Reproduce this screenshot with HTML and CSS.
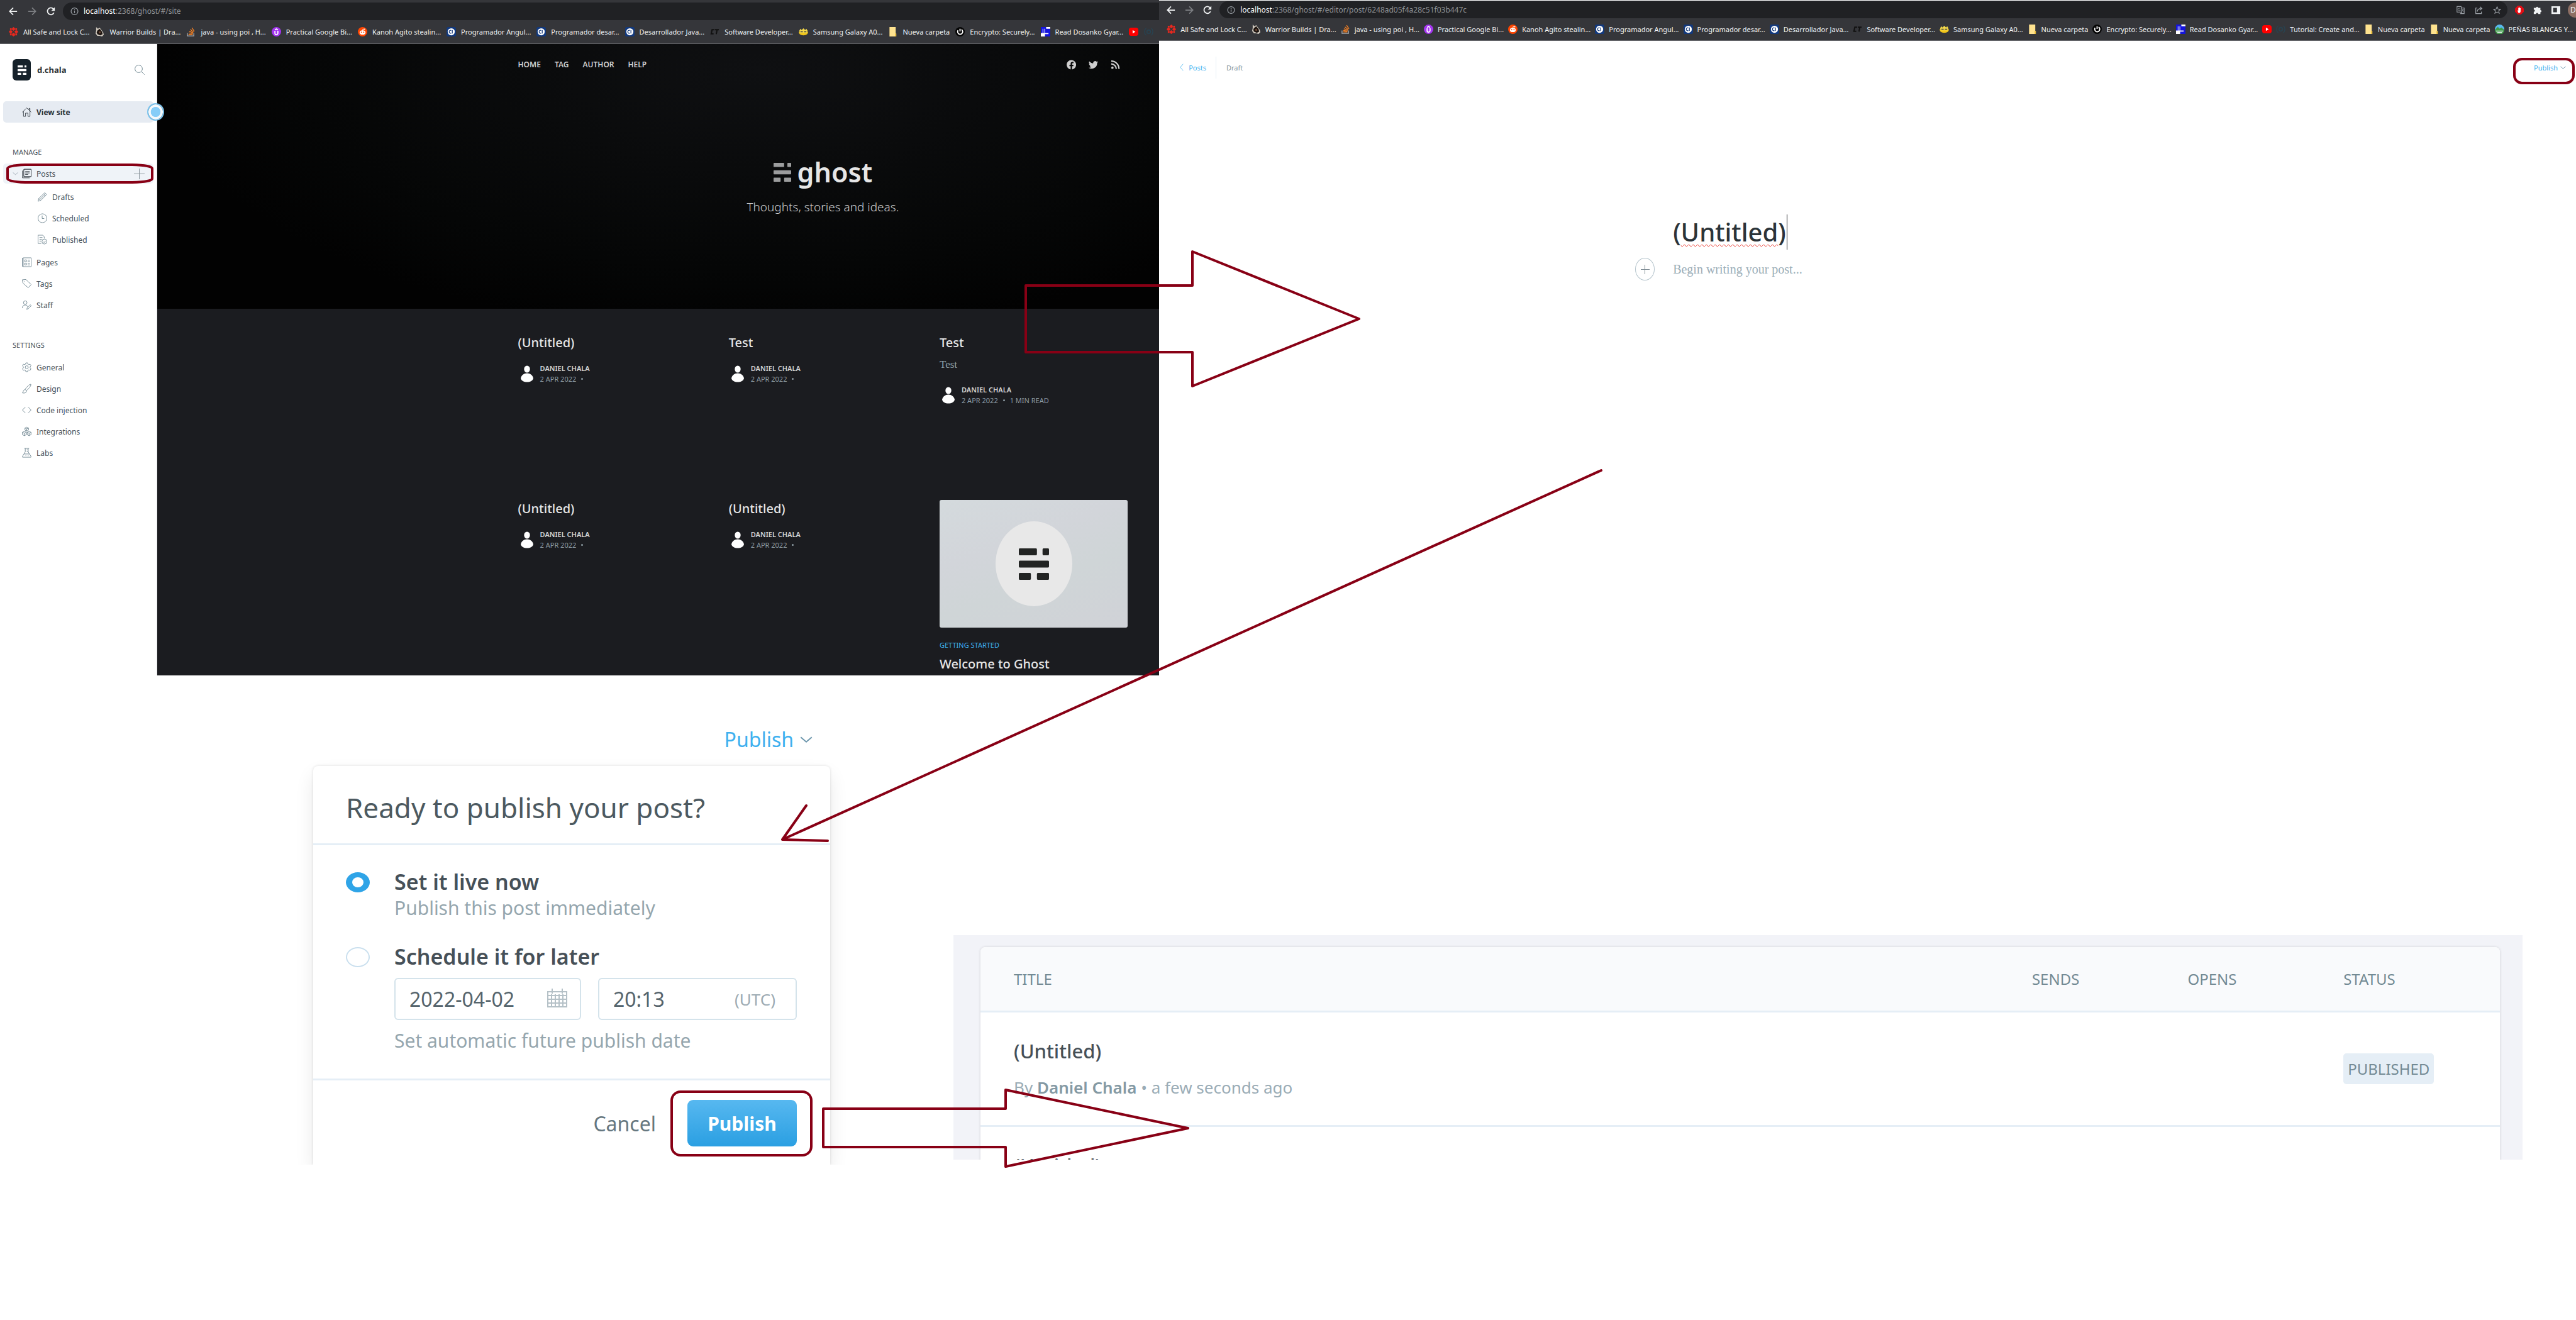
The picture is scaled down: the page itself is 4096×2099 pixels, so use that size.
FILE: index.html
```html
<!DOCTYPE html>
<html lang="en">
<head>
<meta charset="utf-8">
<title>Ghost publishing flow</title>
<link rel="stylesheet" href="styles.css">
</head>
<body>
<svg class="defs" aria-hidden="true">
  <symbol id="back" viewBox="0 0 16 16"><path d="M15 8H2M8 1.5 1.5 8 8 14.500" fill="none" stroke="currentColor" stroke-width="2"/></symbol>
  <symbol id="forward" viewBox="0 0 16 16"><path d="M1 8h13M8 1.500 14.500 8 8 14.500" fill="none" stroke="currentColor" stroke-width="2"/></symbol>
  <symbol id="reload" viewBox="0 0 16 16"><path d="M13.500 10.500A6.200 6.200 0 1 1 12.800 4" fill="none" stroke="currentColor" stroke-width="2"/><path d="M15 .5v6.500H8.500z" fill="currentColor"/></symbol>
  <symbol id="info" viewBox="0 0 16 16"><circle cx="8" cy="8" r="6.700" fill="none" stroke="currentColor" stroke-width="1.500"/><path d="M8 7v4.500M8 4.200v1.700" stroke="currentColor" stroke-width="1.600"/></symbol>
  <symbol id="fandom" viewBox="0 0 16 16"><g fill="#e8281e"><path d="M8 0l2.500 2v2.500L8 6.500 5.500 4.500V2zM8 16l2.500-2v-2.500L8 9.500l-2.500 2V14zM0 8l2-2.500h2.500L6.500 8l-2 2.500H2zM16 8l-2-2.500h-2.500L9.500 8l2 2.500H14z"/><path d="M2 2h3v3H2zM11 2h3v3h-3zM2 11h3v3H2zM11 11h3v3h-3z"/></g></symbol>
  <symbol id="warrior" viewBox="0 0 16 16"><path d="M2 0l3 3 3-2 3 4 3 4 1 4-3 3-4-1-4 0-3-4 1-5z" fill="#cfc8bd"/><path d="M4 6l4-3 4 5 1 4-4 2-5-2-1-3z" fill="#1b130f"/><path d="M6 8l3-1 1 3-3 1z" fill="#6d4a37"/></symbol>
  <symbol id="stack" viewBox="0 0 16 16"><path d="M2 10v5h11v-5" fill="none" stroke="#a9adb1" stroke-width="1.400"/><path d="M4 12.500h7M4.300 10l7 1M5.200 7l6.500 2.800M7 4l5.500 4.500M9.800 1.300l4 6" stroke="#f48024" stroke-width="1.400"/></symbol>
  <symbol id="udemy" viewBox="0 0 16 16"><circle cx="8" cy="8" r="8" fill="#a435f0"/><path d="M5.500 6.500v4a2.500 2.500 0 0 0 5 0v-4M5.500 5 8 3.300 10.500 5" fill="none" stroke="#fff" stroke-width="1.800"/></symbol>
  <symbol id="reddit" viewBox="0 0 16 16"><circle cx="8" cy="8" r="8" fill="#ff4500"/><ellipse cx="8" cy="9.300" rx="5" ry="3.600" fill="#fff"/><circle cx="11.300" cy="3.800" r="1.100" fill="#fff"/><path d="M8 6l.7-2.700 2.300.5" fill="none" stroke="#fff"/><circle cx="6" cy="8.800" r="1" fill="#ff4500"/><circle cx="10" cy="8.800" r="1" fill="#ff4500"/></symbol>
  <symbol id="ct" viewBox="0 0 16 16"><rect width="16" height="16" rx="3" fill="#12397d"/><circle cx="8" cy="8" r="6" fill="#fff"/><path d="M8 5.700a2.500 2.500 0 1 0 0 4.600M9.800 5v6" fill="none" stroke="#12397d" stroke-width="1.300"/></symbol>
  <symbol id="ctdark" viewBox="0 0 16 16"><path d="M7.500 4.500H3.500L2 11.500h4M8.500 4.500H15M12 4.500 10.500 12" fill="none" stroke="#111" stroke-width="2.200"/></symbol>
  <symbol id="samsung" viewBox="0 0 16 16"><path d="M0 8h16c-.5 4-3 6-8 6S.5 12 0 8z" fill="#f0c419"/><path d="M1 6l2-3 2 2 3-3 3 3 2-2 2 3-1 4H2z" fill="#f4d94a"/><path d="M3 8h4M9 8h4" stroke="#444" stroke-width="1.500"/></symbol>
  <symbol id="folder" viewBox="0 0 16 16"><path d="M2.500 0H13v11h1v5H2.500z" fill="#ffe38f"/><path d="M12 11h2v5h-2z" fill="#e8b931"/></symbol>
  <symbol id="encrypto" viewBox="0 0 16 16"><circle cx="8" cy="8" r="8" fill="#050505"/><path d="M10.500 4.300A4.300 4.300 0 1 1 4.600 5.700M8 3v4.500" fill="none" stroke="#fff" stroke-width="1.900"/></symbol>
  <symbol id="manga" viewBox="0 0 16 16"><rect width="16" height="16" fill="#fff"/><path d="M0 0h9v10H7V3H6v7H4V3H3v7H0zM8 3h8v13H7v-4h6v-2H9z" fill="#1414dc"/></symbol>
  <symbol id="youtube" viewBox="0 0 16 16"><rect y="1" width="16" height="14" rx="4" fill="#f00"/><path d="M6.300 5v6l4.700-3z" fill="#fff"/></symbol>
  <symbol id="tutorial" viewBox="0 0 16 16"><path d="M4 2C0 4 0 12 4 14M12 2c4 2 4 10 0 12" fill="none" stroke="#29424f" stroke-width="1.600"/><circle cx="8" cy="8" r="3" fill="none" stroke="#29424f" stroke-width="2"/></symbol>
  <symbol id="penas" viewBox="0 0 16 16"><circle cx="8" cy="8" r="8" fill="#58b8ea"/><path d="M0 9l5-5 3 3 3-2 5 4a8 8 0 0 1-16 0z" fill="#3f9b46"/><path d="M2 11h12M4 13.500h8" stroke="#e6eef2" stroke-width="1.300"/></symbol>
  <symbol id="translate" viewBox="0 0 16 16"><path d="M1 1h8l1.500 11H1zM9.500 4H15v11H8l2-3" fill="none" stroke="currentColor" stroke-width="1.400"/><path d="M7.500 5.500A2.500 2.500 0 1 0 7.700 8H5.500M11 7h3M12.500 7c0 2-1 3-2 4M11.500 8.500 14 11.500" fill="none" stroke="currentColor"/></symbol>
  <symbol id="share" viewBox="0 0 16 16"><path d="M5 4H2v11h11v-4M5 11c0-4 3-6 8-6M10 1.500 14 5l-4 3.500" fill="none" stroke="currentColor" stroke-width="1.500"/></symbol>
  <symbol id="star" viewBox="0 0 16 16"><path d="M8 1.500l2 4.500 4.800.4-3.700 3.200 1.200 4.800L8 11.800l-4.300 2.600 1.200-4.800L1.200 6.400 6 6z" fill="none" stroke="currentColor" stroke-width="1.300"/></symbol>
  <symbol id="adblock" viewBox="0 0 16 16"><path d="M5 0h6l5 5v6l-5 5H5l-5-5V5z" fill="#e30d13"/><path d="M4.500 8l1.500 1V4h1v3.500V3h1v4.500V3.500h1V8V4.500h1.200V10c0 2-1 3.300-2.700 3.300S5.500 12 4.500 8z" fill="#fff"/></symbol>
  <symbol id="puzzle" viewBox="0 0 16 16"><path d="M1 4h4a2 2 0 1 1 4 0h4v4a2 2 0 1 1 0 4v3H9a2 2 0 1 0-4 0H1v-4a2 2 0 1 0 0-4z" fill="currentColor"/></symbol>
  <symbol id="panel" viewBox="0 0 16 16"><path d="M0 1h16v14H0zM3 4v8h7V4z" fill="currentColor" fill-rule="evenodd"/></symbol>
  <symbol id="chevron" viewBox="0 0 16 16"><path d="M1 5l7 6 7-6" fill="none" stroke="currentColor" stroke-width="1.500"/></symbol>
  <symbol id="chevleft" viewBox="0 0 8 16"><path d="M7 1 1 8l6 7" fill="none" stroke="currentColor"/></symbol>
  <symbol id="search" viewBox="0 0 16 16"><circle cx="6.500" cy="6.500" r="5.900" fill="none" stroke="currentColor"/><path d="M11 11l4.700 4.700" stroke="currentColor"/></symbol>
  <symbol id="home" viewBox="0 0 16 16"><path d="M.5 8.500 8 1l7.500 7.500M2.500 7v8.500H6V10h4v5.500h3.500V7M12 4.500V2h1.500v4" fill="none" stroke="currentColor"/></symbol>
  <symbol id="posts" viewBox="0 0 16 16"><rect x="3" y=".7" width="12.500" height="12.500" rx="1" fill="none" stroke="currentColor" stroke-width="1.200"/><path d="M.7 3v12.300H13M5.500 4.500h7.500M5.500 7h7.500M5.500 9.500h5" fill="none" stroke="currentColor"/></symbol>
  <symbol id="pencil" viewBox="0 0 16 16"><path d="M.5 15.500l1.300-4.800L12 .9l3 3L4.900 14.200zM1.800 10.700l3.100 3.500M10 3l3 3M3.500 12.500l8-8" fill="none" stroke="currentColor"/></symbol>
  <symbol id="clock" viewBox="0 0 16 16"><circle cx="8" cy="8" r="7.500" fill="none" stroke="currentColor"/><path d="M7.500 3.500v5H11" fill="none" stroke="currentColor"/></symbol>
  <symbol id="published" viewBox="0 0 16 16"><path d="M6 14.500H.5V.5h8L11 3v3M3 4.500h5M3 7.500h4M3 10.500h2.500" fill="none" stroke="currentColor"/><circle cx="11.300" cy="11.300" r="4.200" fill="none" stroke="currentColor"/><path d="M9.300 11.500l1.500 1.500 2.700-3" fill="none" stroke="currentColor"/></symbol>
  <symbol id="pages" viewBox="0 0 16 16"><path d="M2 .5h13.500v15H2zM.7.5v15M4.500 4h3v3h-3zM4.500 9.500h3v3h-3zM9.500 4.500h4M9.500 7h4M9.500 10h4M9.500 12.500h4" fill="none" stroke="currentColor"/></symbol>
  <symbol id="tag" viewBox="0 0 16 16"><path d="M.5 1.500l6-.5 9 8.500-5 5.500-9-8zM4 4.500h1" fill="none" stroke="currentColor"/></symbol>
  <symbol id="staff" viewBox="0 0 16 16"><circle cx="5.500" cy="4" r="3" fill="none" stroke="currentColor"/><path d="M.5 13c0-6 8-6.500 9-2M8 15.500l1-3 5-5 1.700 1.700-5 5z" fill="none" stroke="currentColor"/></symbol>
  <symbol id="gear" viewBox="0 0 16 16"><circle cx="8" cy="8" r="2.600" fill="none" stroke="currentColor"/><path d="M6.500.6h3l.5 2.100 1.500.8 2.100-.7 1.700 2.600L13.700 7v2l1.600 1.600-1.700 2.600-2.100-.7-1.500.8-.5 2.100h-3L6 13.300l-1.500-.8-2.100.7-1.700-2.600L2.300 9V7L.7 5.400l1.700-2.600 2.100.7L6 2.700z" fill="none" stroke="currentColor"/></symbol>
  <symbol id="brush" viewBox="0 0 16 16"><path d="M.5 15c2-.5 1-4 3.500-5s5 2 3 4-5 1.500-6.500 1zM5 9.700C8 5 12 1 15 .6c.8 2-3 7-7.300 10.400" fill="none" stroke="currentColor"/></symbol>
  <symbol id="code" viewBox="0 0 16 16"><path d="M5.500 3 .7 8l4.800 5M10.500 3l4.800 5-4.800 5" fill="none" stroke="currentColor"/></symbol>
  <symbol id="blocks" viewBox="0 0 16 16"><path d="M8 .8l3 1.500v3.500L8 7.500 5 5.800V2.300zM5 2.300l3 1.500 3-1.500M8 3.800v3.700M4 8l3.300 1.500v4L4 15.300.7 13.500v-4zM.7 9.500 4 11l3.300-1.500M4 11v4.300M12 8l3.300 1.500v4L12 15.300l-3.300-1.800v-4zM8.700 9.500 12 11l3.300-1.500M12 11v4.300" fill="none" stroke="currentColor"/></symbol>
  <symbol id="flask" viewBox="0 0 16 16"><path d="M4 .5h8M5.500.5v6L.8 14v1.500h14.400V14l-4.700-7.500v-6M3.500 10h9M8 3h2.500M8 5.500h2.500M6 12.500h1M10 13h1" fill="none" stroke="currentColor"/></symbol>
  <symbol id="bars" viewBox="0 0 70 50" preserveAspectRatio="none"><path d="M2 0h38a2 2 0 0 1 2 2v7a2 2 0 0 1-2 2H2a2 2 0 0 1-2-2V2a2 2 0 0 1 2-2zM57 0h11a2 2 0 0 1 2 2v7a2 2 0 0 1-2 2H57a2 2 0 0 1-2-2V2a2 2 0 0 1 2-2zM2 19.500h66a2 2 0 0 1 2 2v7a2 2 0 0 1-2 2H2a2 2 0 0 1-2-2v-7a2 2 0 0 1 2-2zM2 39h24a2 2 0 0 1 2 2v7a2 2 0 0 1-2 2H2a2 2 0 0 1-2-2v-7a2 2 0 0 1 2-2zM44 39h24a2 2 0 0 1 2 2v7a2 2 0 0 1-2 2H44a2 2 0 0 1-2-2v-7a2 2 0 0 1 2-2z" fill="currentColor"/></symbol>
  <symbol id="facebook" viewBox="0 0 16 16"><path d="M8 0a8 8 0 0 1 1.300 15.900V10.300h2l.4-2.300H9.300V6.500c0-.7.3-1.200 1.300-1.200h1.100V3.200C9 2.700 6.800 3.300 6.800 6v2h-2v2.300h2v5.600A8 8 0 0 1 8 0z" fill="currentColor"/></symbol>
  <symbol id="twitter" viewBox="0 0 16 16"><path d="M16 3.200c-.6.300-1.200.4-1.900.5.700-.4 1.200-1 1.400-1.800-.6.400-1.300.6-2.100.8a3.300 3.300 0 0 0-5.600 3C5.100 5.500 2.700 4.200 1.100 2.200a3.300 3.300 0 0 0 1 4.400c-.5 0-1-.2-1.500-.4 0 1.600 1.100 2.900 2.600 3.200-.5.100-1 .2-1.500.1.400 1.300 1.600 2.200 3.100 2.300A6.600 6.600 0 0 1 0 13.100 9.300 9.300 0 0 0 14.400 4.800c.6-.4 1.200-1 1.600-1.600z" fill="currentColor"/></symbol>
  <symbol id="rss" viewBox="0 0 16 16"><circle cx="3" cy="13" r="2" fill="currentColor"/><path d="M1 6.500A8.500 8.500 0 0 1 9.500 15M1 1.800A13.200 13.200 0 0 1 14.200 15" fill="none" stroke="currentColor" stroke-width="2.400"/></symbol>
  <symbol id="person" viewBox="0 0 20 27" preserveAspectRatio="none"><ellipse cx="10" cy="6" rx="4.700" ry="5.500" fill="#fff"/><path d="M10 12.500c5 0 9 3 10 8-1 4-5 6-10 6s-9-2-10-6c1-5 5-8 10-8z" fill="#fff"/></symbol>
  <symbol id="calendar" viewBox="0 0 32 30"><path d="M1 5h30v24H1zM1 11h30M1 17h30M1 23h30M7 9v20M13 9v20M19 9v20M25 9v20M8 0v8M24 0v8" fill="none" stroke="#b5c1c7" stroke-width="2"/></symbol>
</svg>

<div class="windows">
  <section class="window window-site">
    <header class="chrome">
      <div class="toolbar">
        <button class="tool" aria-label="Back"><svg><use href="#back"/></svg></button>
        <button class="tool dim" aria-label="Forward"><svg><use href="#forward"/></svg></button>
        <button class="tool" aria-label="Reload"><svg><use href="#reload"/></svg></button>
        <div class="omnibox"><svg><use href="#info"/></svg><span class="url"><b>localhost</b>:2368/ghost/#/site</span></div>
      </div>
      <nav class="bookmarks">
        <a href="#"><svg><use href="#fandom"/></svg>All Safe and Lock C...</a>
        <a href="#"><svg><use href="#warrior"/></svg>Warrior Builds | Dra...</a>
        <a href="#"><svg><use href="#stack"/></svg>java - using poi , H...</a>
        <a href="#"><svg><use href="#udemy"/></svg>Practical Google Bi...</a>
        <a href="#"><svg><use href="#reddit"/></svg>Kanoh Agito stealin...</a>
        <a href="#"><svg><use href="#ct"/></svg>Programador Angul...</a>
        <a href="#"><svg><use href="#ct"/></svg>Programador desar...</a>
        <a href="#"><svg><use href="#ct"/></svg>Desarrollador Java...</a>
        <a href="#"><svg><use href="#ctdark"/></svg>Software Developer...</a>
        <a href="#"><svg><use href="#samsung"/></svg>Samsung Galaxy A0...</a>
        <a href="#"><svg><use href="#folder"/></svg>Nueva carpeta</a>
        <a href="#"><svg><use href="#encrypto"/></svg>Encrypto: Securely...</a>
        <a href="#"><svg><use href="#manga"/></svg>Read Dosanko Gyar...</a>
        <a href="#" aria-label="YouTube"><svg><use href="#youtube"/></svg></a>
        <a href="#" aria-label="Tutorial"><svg><use href="#tutorial"/></svg></a>
      </nav>
    </header>
    <div class="admin">
      <aside class="sidebar">
        <div class="brand">
          <span class="brand-logo"><svg><use href="#bars"/></svg></span>
          <span class="brand-name">d.chala</span>
          <button class="icon-button" aria-label="Search"><svg><use href="#search"/></svg></button>
        </div>
        <a class="row active" href="#"><svg><use href="#home"/></svg>View site<span class="handle"></span></a>
        <h2 class="group">MANAGE</h2>
        <div class="row selected">
          <svg class="fold"><use href="#chevron"/></svg>
          <a href="#"><svg><use href="#posts"/></svg>Posts</a>
          <button class="plus" aria-label="New post"></button>
        </div>
        <div class="sub">
          <a class="row" href="#"><svg><use href="#pencil"/></svg>Drafts</a>
          <a class="row" href="#"><svg><use href="#clock"/></svg>Scheduled</a>
          <a class="row" href="#"><svg><use href="#published"/></svg>Published</a>
        </div>
        <a class="row" href="#"><svg><use href="#pages"/></svg>Pages</a>
        <a class="row" href="#"><svg><use href="#tag"/></svg>Tags</a>
        <a class="row" href="#"><svg><use href="#staff"/></svg>Staff</a>
        <h2 class="group">SETTINGS</h2>
        <a class="row" href="#"><svg><use href="#gear"/></svg>General</a>
        <a class="row" href="#"><svg><use href="#brush"/></svg>Design</a>
        <a class="row" href="#"><svg><use href="#code"/></svg>Code injection</a>
        <a class="row" href="#"><svg><use href="#blocks"/></svg>Integrations</a>
        <a class="row" href="#"><svg><use href="#flask"/></svg>Labs</a>
      </aside>
      <main class="site">
        <div class="hero">
          <nav class="site-nav">
            <a href="#">HOME</a><a href="#">TAG</a><a href="#">AUTHOR</a><a href="#">HELP</a>
            <span class="social">
              <a href="#" aria-label="Facebook"><svg><use href="#facebook"/></svg></a>
              <a href="#" aria-label="Twitter"><svg><use href="#twitter"/></svg></a>
              <a href="#" aria-label="RSS"><svg><use href="#rss"/></svg></a>
            </span>
          </nav>
          <h1 class="logo"><svg><use href="#bars"/></svg>ghost</h1>
          <p class="tagline">Thoughts, stories and ideas.</p>
        </div>
        <div class="posts">
          <article><h3>(Untitled)</h3>
            <div class="byline"><svg><use href="#person"/></svg><div><b>DANIEL CHALA</b><span>2 APR 2022 <i></i></span></div></div></article>
          <article><h3>Test</h3>
            <div class="byline"><svg><use href="#person"/></svg><div><b>DANIEL CHALA</b><span>2 APR 2022 <i></i></span></div></div></article>
          <article><h3>Test</h3><p class="excerpt">Test</p>
            <div class="byline"><svg><use href="#person"/></svg><div><b>DANIEL CHALA</b><span>2 APR 2022 <i></i> 1 MIN READ</span></div></div></article>
          <article><h3>(Untitled)</h3>
            <div class="byline"><svg><use href="#person"/></svg><div><b>DANIEL CHALA</b><span>2 APR 2022 <i></i></span></div></div></article>
          <article><h3>(Untitled)</h3>
            <div class="byline"><svg><use href="#person"/></svg><div><b>DANIEL CHALA</b><span>2 APR 2022 <i></i></span></div></div></article>
          <article>
            <div class="cover"><span><svg><use href="#bars"/></svg></span></div>
            <a class="topic" href="#">GETTING STARTED</a>
            <h3>Welcome to Ghost</h3></article>
        </div>
      </main>
    </div>
  </section>

  <section class="window window-editor">
    <header class="chrome">
      <div class="toolbar">
        <button class="tool" aria-label="Back"><svg><use href="#back"/></svg></button>
        <button class="tool dim" aria-label="Forward"><svg><use href="#forward"/></svg></button>
        <button class="tool" aria-label="Reload"><svg><use href="#reload"/></svg></button>
        <div class="omnibox"><svg><use href="#info"/></svg><span class="url"><b>localhost</b>:2368/ghost/#/editor/post/6248ad05f4a28c51f03b447c</span>
          <svg><use href="#translate"/></svg><svg><use href="#share"/></svg><svg><use href="#star"/></svg></div>
        <div class="extensions"><svg><use href="#adblock"/></svg><svg><use href="#puzzle"/></svg><svg><use href="#panel"/></svg></div>
        <span class="profile">D</span>
      </div>
      <nav class="bookmarks">
        <a href="#"><svg><use href="#fandom"/></svg>All Safe and Lock C...</a>
        <a href="#"><svg><use href="#warrior"/></svg>Warrior Builds | Dra...</a>
        <a href="#"><svg><use href="#stack"/></svg>java - using poi , H...</a>
        <a href="#"><svg><use href="#udemy"/></svg>Practical Google Bi...</a>
        <a href="#"><svg><use href="#reddit"/></svg>Kanoh Agito stealin...</a>
        <a href="#"><svg><use href="#ct"/></svg>Programador Angul...</a>
        <a href="#"><svg><use href="#ct"/></svg>Programador desar...</a>
        <a href="#"><svg><use href="#ct"/></svg>Desarrollador Java...</a>
        <a href="#"><svg><use href="#ctdark"/></svg>Software Developer...</a>
        <a href="#"><svg><use href="#samsung"/></svg>Samsung Galaxy A0...</a>
        <a href="#"><svg><use href="#folder"/></svg>Nueva carpeta</a>
        <a href="#"><svg><use href="#encrypto"/></svg>Encrypto: Securely...</a>
        <a href="#"><svg><use href="#manga"/></svg>Read Dosanko Gyar...</a>
        <a href="#" aria-label="YouTube"><svg><use href="#youtube"/></svg></a>
        <a href="#"><svg><use href="#tutorial"/></svg>Tutorial: Create and...</a>
        <a href="#"><svg><use href="#folder"/></svg>Nueva carpeta</a>
        <a href="#"><svg><use href="#folder"/></svg>Nueva carpeta</a>
        <a href="#"><svg><use href="#penas"/></svg>PEÑAS BLANCAS Y...</a>
      </nav>
    </header>
    <div class="editor-bar">
      <a class="crumb" href="#"><svg><use href="#chevleft"/></svg>Posts</a>
      <span class="state">Draft</span>
      <button class="publish-link">Publish<svg><use href="#chevron"/></svg></button>
    </div>
    <main class="editor">
      <h1 class="post-title">(<span>Untitled</span>)</h1>
      <div class="body-line">
        <button class="add" aria-label="Add a card"></button>
        <input class="post-body" type="text" aria-label="Post body" placeholder="Begin writing your post...">
      </div>
    </main>
  </section>
</div>

<div class="details">
  <section class="publish-menu">
    <button class="publish-trigger">Publish<svg><use href="#chevron"/></svg></button>
    <form class="dialog">
      <h2>Ready to publish your post?</h2>
      <div class="options">
        <input type="radio" name="when" id="now" checked>
        <div><label for="now">Set it live now</label><p>Publish this post immediately</p></div>
        <input type="radio" name="when" id="later">
        <div><label for="later">Schedule it for later</label>
          <div class="fields">
            <div class="field date"><input type="text" aria-label="Publish date" value="2022-04-02"><svg><use href="#calendar"/></svg></div>
            <div class="field time"><input type="text" aria-label="Publish time" value="20:13"><span>(UTC)</span></div>
          </div>
          <p>Set automatic future publish date</p></div>
      </div>
      <footer><button type="button" class="cancel">Cancel</button><button type="button" class="confirm">Publish</button></footer>
    </form>
  </section>

  <section class="listing">
    <table>
      <colgroup><col class="c-title"><col class="c-num"><col class="c-num"><col class="c-status"></colgroup>
      <thead><tr><th>TITLE</th><th>SENDS</th><th>OPENS</th><th>STATUS</th></tr></thead>
      <tbody>
        <tr><td><h3>(Untitled)</h3><p>By <b>Daniel Chala</b> • a few seconds ago</p></td><td></td><td></td><td><span class="badge">PUBLISHED</span></td></tr>
        <tr><td><h3>(Untitled)</h3></td><td></td><td></td><td></td></tr>
      </tbody>
    </table>
  </section>
</div>

<svg class="marks" viewBox="0 0 4096 2099" preserveAspectRatio="none" aria-hidden="true">
  <path d="M1631 454H1896V400L2161 507 1896 614V560H1631Z"/>
  <path d="M2546 748 1244 1335M1282 1281l-38 54 72 2"/>
  <path d="M1309 1763H1599V1733L1889 1794 1599 1855V1824H1309Z"/>
  <path d="M40 262H210Q242 263 242 268V284Q242 289 210 290H40Q12 289 12 284V268Q12 263 40 262Z"/>
  <rect x="3998" y="94" width="94" height="38" rx="12"/>
  <rect x="1068" y="1736" width="222" height="101" rx="14"/>
</svg>
</body>
</html>
```
FILE: styles.css
```css
* { box-sizing: border-box; }
body {
  margin: 0;
  min-height: 100vh;
  position: relative;
  background: #fff;
  color: #465058;
  font-family: "Noto Sans", "Open Sans", sans-serif;
  font-size: 12px;
}
h1, h2, h3, p { margin: 0; font-weight: 400; }
a { color: inherit; text-decoration: none; }
button { margin: 0; padding: 0; border: 0; background: none; color: inherit; font: inherit; }
input { font: inherit; color: inherit; }
svg { display: block; flex: none; }
.defs { position: absolute; width: 0; height: 0; }
.marks {
  position: absolute; left: 0; top: 0; width: 100%; height: 100%;
  fill: none; stroke: #880015; stroke-width: 4; stroke-linejoin: round; stroke-linecap: round;
  pointer-events: none;
}

/* browser windows */
.windows { display: flex; align-items: flex-start; }
.window-site { width: 45%; overflow: hidden; }
.window-editor { width: 55%; padding-top: 1px; overflow: hidden; }
.chrome { background: #35363a; border-bottom: 1px solid #66676b; color: #f1f3f4; overflow: hidden; }
.toolbar { display: flex; align-items: center; padding-top: 4px; padding-left: 14px; }
.tool { margin-right: 16px; }
.tool:nth-child(3) { margin-right: 12px; }
.tool svg { width: 14px; height: 16px; }
.tool.dim { color: #7d7f83; }
.omnibox {
  flex: 1; display: flex; align-items: center; height: 28px; padding-left: 12px;
  background: #202124; border-radius: 14px 0 0 14px; color: #9aa0a6;
}
.omnibox svg { width: 13px; height: 14px; }
.url { flex: 1; margin-left: 8px; line-height: 20px; color: #8f9296; }
.url b { font-weight: 400; color: #fff; }
.bookmarks { display: flex; align-items: center; gap: 9px; height: 37px; padding-left: 14px; font-size: 11px; white-space: nowrap; }
.bookmarks a { flex: none; display: flex; align-items: center; gap: 8px; }
.bookmarks svg { width: 15px; height: 15px; }
.window-editor .toolbar { padding-top: 1px; padding-left: 12px; }
.window-editor .tool { margin-right: 15px; }
.window-editor .tool:nth-child(3) { margin-right: 12px; }
.window-editor .omnibox { height: 27px; padding-right: 10px; border-radius: 14px; }
.window-editor .omnibox .url ~ svg { margin-left: 16px; }
.window-editor .omnibox .url + svg { margin-left: 0; }
.window-editor .bookmarks { gap: 7px; height: 35px; padding-left: 12px; }
.window-editor .bookmarks a { gap: 7px; }
.extensions { display: flex; gap: 15px; margin-left: 12px; }
.extensions svg { width: 14px; height: 16px; }
.profile { width: 13px; margin-left: 12px; border-radius: 12px 0 0 12px; background: #8d6e63; line-height: 24px; padding-left: 4px; overflow: hidden; }

/* admin sidebar */
.admin { display: flex; }
.sidebar { flex: none; width: 250px; padding: 24px 5px 0; border-right: 1px solid #e1e3e6; background: #fff; position: relative; }
.brand { display: flex; align-items: center; padding: 0 14px 0 15px; margin-bottom: 33px; }
.brand-logo { display: grid; place-items: center; width: 29px; height: 34px; border-radius: 6px; background: #15212a; color: #fff; }
.brand-logo svg { width: 14px; height: 15px; }
.brand-name { flex: 1; margin-left: 10px; font-size: 13px; font-weight: 700; color: #2b3238; }
.icon-button svg { width: 16px; height: 16px; color: #738a94; }
.row { display: flex; align-items: center; height: 34px; padding-left: 30px; border-radius: 5px; }
.row svg { width: 15px; height: 16px; margin-right: 8px; color: #738a94; }
.active { background: #e6ebf2; font-weight: 700; color: #2b3238; position: relative; }
.active svg { color: #394047; }
.handle { position: absolute; right: -17px; top: 3px; width: 27px; height: 28px; border-radius: 50%; border: 2px solid #7cc4ee; background: radial-gradient(#86cdf8 0 45%, #f4f8fb 50% 68%, #7b858c 72%); }
.group { margin: 38px 0 9px 15px; font-size: 11px; line-height: 18px; }
.selected { height: 32px; padding-left: 15px; background: #eff3f8; }
.selected .fold { width: 9px; height: 12px; margin-right: 6px; color: #95a3ac; }
.selected a { display: flex; align-items: center; flex: 1; }
.selected a svg { color: #394047; }
.plus { width: 17px; height: 17px; margin-right: 14px; background: linear-gradient(#8c969d, #8c969d) center / 100% 1px no-repeat, linear-gradient(#8c969d, #8c969d) center / 1px 100% no-repeat; }
.sub { margin: 4px 0 2px; }
.sub .row { padding-left: 55px; }

/* public site */
.site { flex: 1; background: #1b1c20; color: #e6e6e6; }
.hero, .posts { padding-left: 36%; padding-right: 50px; }
.hero { padding-top: 23px; padding-bottom: 148px; background: #020303 radial-gradient(ellipse 60% 100% at 60% 10%, #0f1012, #050606 75%, #020202); text-align: center; }
.site-nav { display: flex; align-items: center; gap: 22px; font-weight: 600; line-height: 20px; color: #cfcfcf; }
.social { flex: 1; display: flex; justify-content: flex-end; gap: 20px; padding-right: 12px; }
.social svg { width: 15px; height: 16px; }
.logo { display: flex; justify-content: center; align-items: center; gap: 10px; margin-top: 131px; font-size: 43px; font-weight: 600; line-height: 60px; }
.logo svg { width: 28px; height: 30px; color: #9c9d9e; }
.tagline { margin-top: 11px; font-size: 19px; font-weight: 300; line-height: 28px; color: #cfcfcf; }
.posts { display: grid; grid-template-columns: repeat(3, 1fr); gap: 36px; padding-top: 40px; padding-bottom: 4px; }
.posts article { min-height: 228px; }
.posts h3 { font-size: 20px; font-weight: 500; line-height: 28px; }
.excerpt { margin-top: 8px; font-family: "Liberation Serif", serif; font-size: 17px; line-height: 26px; color: #90a0a8; }
.byline { display: flex; align-items: center; gap: 11px; margin-top: 18px; padding-left: 4px; font-size: 11px; line-height: 17px; }
.byline svg { width: 20px; height: 27px; }
.byline b { display: block; font-weight: 600; color: #d3d3d3; }
.byline span { display: flex; align-items: center; gap: 8px; color: #8d9ba3; }
.byline i { width: 3px; height: 3px; border-radius: 50%; background: #8d9ba3; }
.cover { display: grid; place-items: center; height: 203px; border-radius: 3px; background: linear-gradient(160deg, #d4dadd, #d2d5da 35%, #cfd5d7 60%, #d0d2d7); }
.cover span { display: grid; place-items: center; width: 122px; height: 135px; border-radius: 50%; background: #e8e8e8; color: #222423; }
.cover svg { width: 48px; height: 50px; }
.topic { display: block; margin: 18px 0 6px; font-size: 11px; line-height: 20px; color: #3eb0ef; }

/* editor */
.editor-bar { display: flex; align-items: center; height: 84px; padding: 0 16px 0 33px; font-size: 11px; }
.crumb { display: flex; align-items: center; gap: 8px; height: 35px; padding-right: 15px; border-right: 1px solid #e5eff5; color: #3eb0ef; }
.crumb svg { width: 6px; height: 12px; }
.state { flex: 1; margin-left: 16px; color: #8598a1; }
.publish-link { display: flex; align-items: center; gap: 4px; color: #3eb0ef; }
.publish-link svg { width: 9px; height: 9px; color: #5a87a0; }
.editor { padding: 192px 0 0 33.6%; }
.post-title { display: inline-block; margin-left: 60px; padding-right: 1px; border-right: 1px solid #15171a; font-size: 40px; font-weight: 500; line-height: 56px; color: #2b3338; }
.post-title span { text-decoration: underline wavy #e8332a 1px; text-underline-offset: 4px; text-decoration-skip-ink: none; }
.body-line { display: flex; align-items: center; gap: 29px; margin-top: 13px; }
.add { width: 31px; height: 36px; border: 1px solid #b3c3cb; border-radius: 50%; background: linear-gradient(#7d8b93, #7d8b93) center / 14px 1px no-repeat, linear-gradient(#7d8b93, #7d8b93) center / 1px 15px no-repeat; }
.post-body { flex: 1; padding: 0; border: 0; outline: 0; background: none; font-family: "Liberation Serif", serif; font-size: 20px; line-height: 30px; }
.post-body::placeholder { color: #9baeb8; }

/* publish menu */
.details { display: flex; align-items: flex-start; padding-left: 468px; padding-right: 85px; }
.publish-menu { flex: none; width: 882px; margin-top: 80px; padding: 0 30px; overflow: hidden; font-size: 32px; }
.publish-trigger { display: flex; align-items: center; gap: 10px; margin: 0 28px 20px auto; line-height: 44px; color: #3eb0ef; }
.publish-trigger svg { width: 20px; height: 20px; color: #6d97ad; }
.dialog { border-radius: 8px 8px 0 0; background: #fff; box-shadow: 0 0 4px rgba(0, 0, 0, .12), 0 14px 30px rgba(0, 0, 0, .09); }
.dialog h2 { padding: 36px 52px 26px; border-bottom: 3px solid #e5eef6; font-size: 44px; line-height: 61px; color: #4c5960; }
.options { display: grid; grid-template-columns: 38px minmax(0, 1fr); gap: 35px 39px; padding: 37px 53px 39px 52px; border-bottom: 3px solid #e5eef6; line-height: 42px; }
.options input[type="radio"] { appearance: none; width: 38px; height: 32px; margin: 6px 0 0; border: 2px solid #c9dfee; border-radius: 50%; background: #fff; }
.options input[type="radio"]:checked { border-color: #2fa4e7; border-width: 8px 10px; }
.options label { display: block; font-size: 34px; font-weight: 600; }
.options p { font-size: 30px; color: #95a6ae; }
.fields { display: flex; gap: 27px; margin: 13px 0 12px; }
.field { display: flex; align-items: center; height: 67px; min-width: 0; padding-left: 22px; border: 2px solid #d4e3eb; border-radius: 6px; color: #55646c; }
.field input { flex: 1; width: 100%; min-width: 0; padding: 0; border: 0; outline: 0; background: none; }
.field svg { width: 32px; height: 30px; margin: 0 20px 4px 0; }
.field.date { flex: 296 1 0; }
.field.time { flex: 317 1 0; }
.field span { margin-right: 32px; font-size: 26px; color: #9dabb3; }
.dialog footer { display: flex; justify-content: flex-end; align-items: center; gap: 50px; padding: 31px 53px 29px; }
.cancel { color: #66777f; }
.confirm { width: 174px; height: 74px; border-radius: 9px; background: linear-gradient(#57b8f0, #2a9fe2); font-size: 30px; font-weight: 700; color: #fff; }

/* post list */
.listing { flex: 1; max-height: 357px; margin-top: 413px; margin-left: 166px; padding: 19px 36px 0 43px; overflow: hidden; background: #f2f3f8; }
.listing table { width: 100%; border-collapse: separate; border-spacing: 0; table-layout: fixed; border-radius: 8px 8px 0 0; background: #fff; box-shadow: 0 0 4px rgba(0, 0, 0, .14); }
.c-title { width: 69.2%; }
.c-num { width: 10.25%; }
.c-status { width: 10.3%; }
.listing th, .listing td { padding: 0; border-bottom: 3px solid #e5eef6; text-align: left; }
.listing th:first-child, .listing td:first-child { padding-left: 53px; }
.listing th { height: 104px; background: #f9fafc; font-size: 24px; font-weight: 400; color: #738a94; }
.listing th:first-child { border-top-left-radius: 8px; }
.listing th:last-child { border-top-right-radius: 8px; }
.listing td:first-child { padding-top: 40px; padding-bottom: 42px; }
.listing h3 { font-size: 31px; font-weight: 500; line-height: 42px; }
.listing p { margin-top: 19px; font-size: 26px; line-height: 36px; color: #9aacb6; }
.listing b { font-weight: 600; color: #8499a3; }
.badge { display: inline-block; padding: 0 7px; border-radius: 5px; background: #e5eef6; font-size: 24px; line-height: 49px; color: #738a94; }
```
